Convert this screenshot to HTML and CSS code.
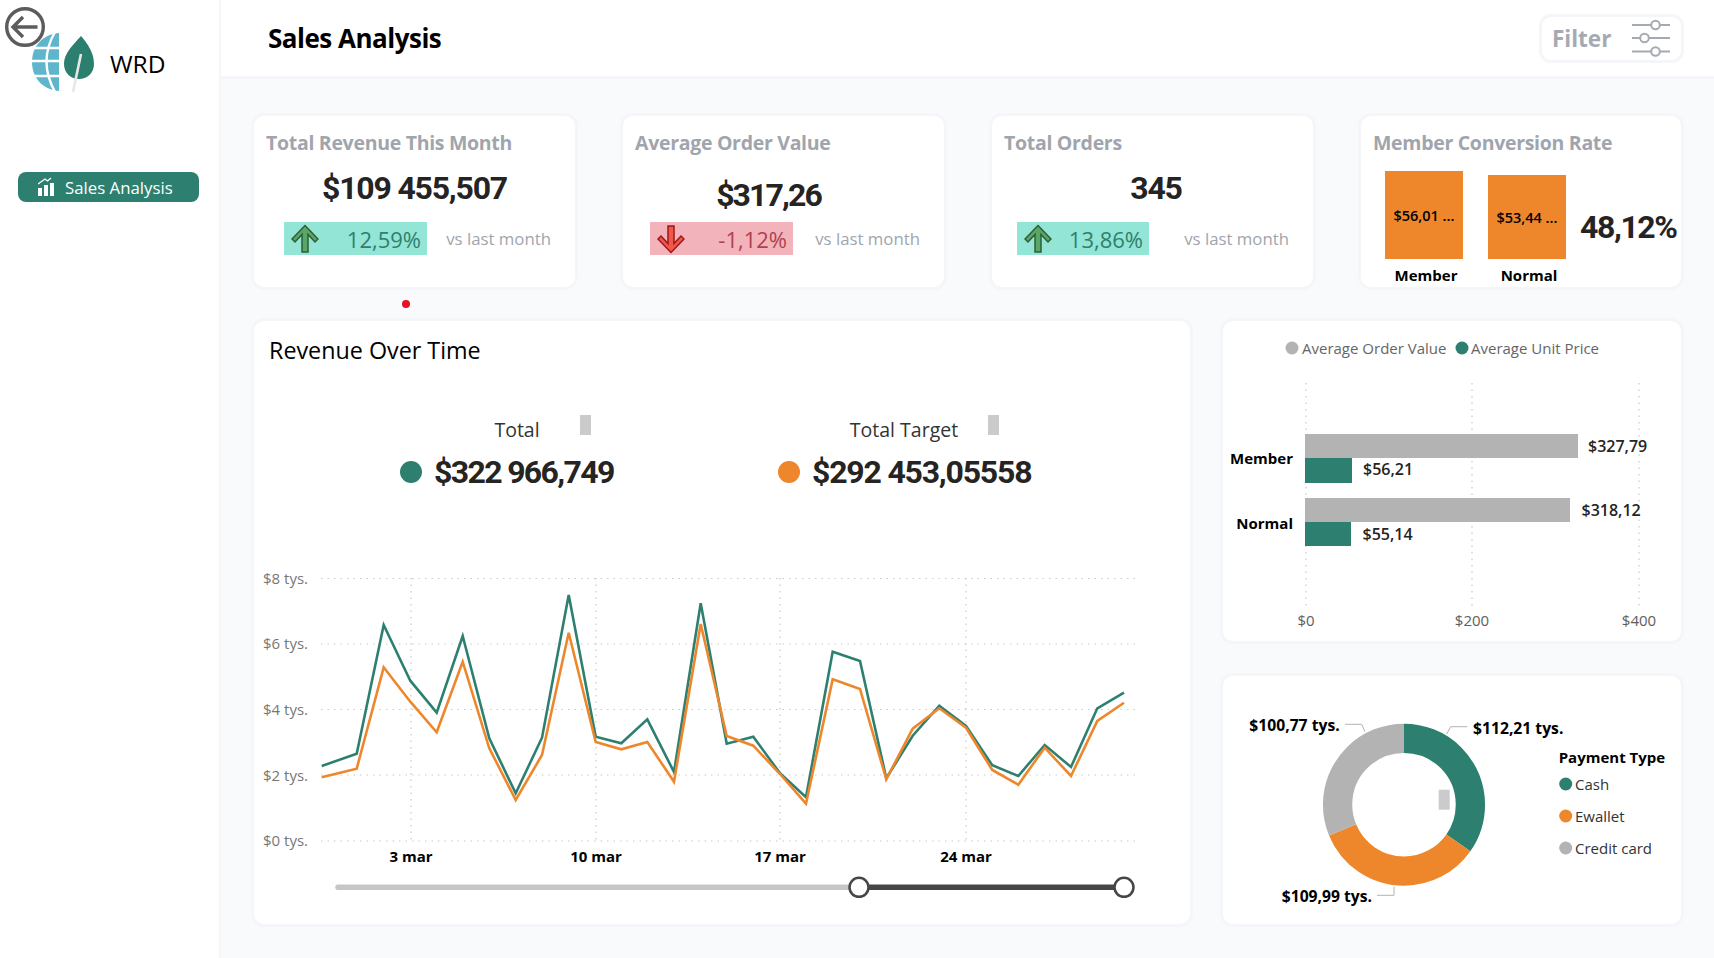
FILE: index.html
```html
<!DOCTYPE html>
<html lang="en">
<head>
    <meta charset="UTF-8">
    <title>Sales Analysis</title>
    <link rel="stylesheet" href="styles.css">
</head>
<body>
<aside class="sidebar">
    <svg class="back" width="42" height="42" viewBox="0 0 42 42">
        <circle cx="21" cy="21" r="18.300" fill="none" stroke="#5c5c5c" stroke-width="3.400"/>
        <path d="M33.500 21H9M19 11L9 21L19 31" fill="none" stroke="#5c5c5c" stroke-width="3.400"/>
    </svg>
    <div class="logo">
        <svg width="68" height="62" viewBox="0 0 68 62">
            <path d="M29 2C13 3 2 15 2 31s11 28 27 29z" fill="#5fb6cc"/>
            <path d="M0 17H29M0 30H29M0 45H29M25 1Q8 30 25 61" fill="none" stroke="#fff" stroke-width="2.400"/>
            <path d="M51 5C43 14 34 22 34 33c0 9 7 15 15 15s15-6 15-15C64 22 58 13 51 5z" fill="#2a7f6f"/>
            <path d="M51 23L43 61" stroke="#e8e8e8" stroke-width="2.600"/>
        </svg>
        <span class="logo-text">WRD</span>
    </div>
    <a class="nav-item">
        <svg width="16" height="20" viewBox="0 0 16 20">
            <path d="M0 11h4v8H0zM6 8h4v11H6zM12 6h4v13h-4z" fill="#fff"/>
            <path d="M0 7L7 2L9.500 4L13 1" fill="none" stroke="#fff" stroke-width="1.300"/>
        </svg>
        Sales Analysis
    </a>
</aside>
<div class="main">
    <header class="topbar">
        <h1>Sales Analysis</h1>
        <div class="filter">
            <span>Filter</span>
            <svg width="38" height="38" viewBox="0 0 38 38" fill="none" stroke="#a5aab2" stroke-width="2">
                <path d="M0 6H19M28 6H38M0 19H8M17 19H38M0 32.500H19M28 32.500H38"/>
                <circle cx="23.500" cy="6" r="4.300"/>
                <circle cx="12.500" cy="19" r="4.300"/>
                <circle cx="23.500" cy="32.500" r="4.300"/>
            </svg>
        </div>
    </header>
    <div class="content">
        <i class="red-dot"></i>
        <section class="kpis">
            <div class="card kpi">
                <h2>Total Revenue This Month</h2>
                <div class="kpi-value">$109 455,507</div>
                <div class="delta-row delta-first">
                    <div class="delta up">
                        <svg width="28" height="30" viewBox="0 0 28 30"><path d="M14 1.500L27 15L24 18L17 10.500V28H11V10.500L4 18L1 15z" fill="#5aa667" stroke="#2f5d3a" stroke-width="1.500"/></svg>
                        <span>12,59%</span>
                    </div>
                    <span class="vs">vs last month</span>
                </div>
            </div>
            <div class="card kpi">
                <h2>Average Order Value</h2>
                <div class="kpi-value kpi-aov">$317,26</div>
                <div class="delta-row delta-second">
                    <div class="delta down">
                        <svg width="28" height="30" viewBox="0 0 28 30"><path d="M14 28.500L27 15L24 12L17 19.500V2H11V19.500L4 12L1 15z" fill="#ee5a4a" stroke="#a3141a" stroke-width="1.500"/></svg>
                        <span>-1,12%</span>
                    </div>
                    <span class="vs">vs last month</span>
                </div>
            </div>
            <div class="card kpi">
                <h2>Total Orders</h2>
                <div class="kpi-value kpi-orders">345</div>
                <div class="delta-row delta-third">
                    <div class="delta up">
                        <svg width="28" height="30" viewBox="0 0 28 30"><path d="M14 1.500L27 15L24 18L17 10.500V28H11V10.500L4 18L1 15z" fill="#5aa667" stroke="#2f5d3a" stroke-width="1.500"/></svg>
                        <span>13,86%</span>
                    </div>
                    <span class="vs">vs last month</span>
                </div>
            </div>
            <div class="card kpi kpi-conversion">
                <h2>Member Conversion Rate</h2>
                <div class="conversion">
                    <div class="mini-col">
                        <div class="mini-bar mini-member">$56,01 ...</div>
                        <span>Member</span>
                    </div>
                    <div class="mini-col">
                        <div class="mini-bar mini-normal">$53,44 ...</div>
                        <span>Normal</span>
                    </div>
                    <div class="kpi-value rate">48,12%</div>
                </div>
            </div>
        </section>
        <section class="lower">
            <div class="card revenue">
                <h2 class="revenue-title">Revenue Over Time</h2>
                <div class="totals">
                    <div class="total total-actual">
                        <div class="total-label">Total<i class="ghost"></i></div>
                        <div class="total-value"><i class="dot teal"></i>$322 966,749</div>
                    </div>
                    <div class="total total-target">
                        <div class="total-label">Total Target<i class="ghost"></i></div>
                        <div class="total-value"><i class="dot orange"></i>$292 453,05558</div>
                    </div>
                </div>
                <svg class="line-chart" width="935" height="345" viewBox="254 560 935 345">
                    <g class="grid">
                        <path d="M321 578.500H1136M321 644H1136M321 709.500H1136M321 775H1136M321 841H1136"/>
                        <path d="M411 578V841M596 578V841M780 578V841M966 578V841"/>
                    </g>
                    <g class="axis">
                        <text x="263" y="584">$8 tys.</text>
                        <text x="263" y="649">$6 tys.</text>
                        <text x="263" y="715">$4 tys.</text>
                        <text x="263" y="781">$2 tys.</text>
                        <text x="263" y="846">$0 tys.</text>
                    </g>
                    <g class="dates">
                        <text x="411" y="862">3 mar</text>
                        <text x="596" y="862">10 mar</text>
                        <text x="780" y="862">17 mar</text>
                        <text x="966" y="862">24 mar</text>
                    </g>
                    <polyline class="serie serie-teal" points="321.700,766 356.700,753.700 383.700,625 410.300,680.700 436.700,712.700 462.700,636 489.300,738.300 515.700,793.300 542,737.700 568.700,595 595.700,736.700 621.300,743.300 647.300,719.300 674,772 700.700,603.300 726.700,743.700 753.300,736.700 780,773.300 806,797.300 832.700,651.700 860,661 886.300,778.300 912.700,735.700 939.300,705.700 966,726 992.300,765.300 1018.300,776 1044.700,745 1071,767 1097.300,708.300 1124,692.700"/>
                    <polyline class="serie serie-orange" points="321.700,777.300 356.700,768.700 383.700,667.300 410.300,701.700 436.700,732.300 462.700,661.700 489.300,748.300 515.700,800 542,755 568.700,632.700 595.700,742 621.300,749.300 647.300,742 674,781.700 700.700,624 726.700,736 753.300,745.700 780,774 806,803.700 832.700,679.300 860,689 886.300,779.300 912.700,728.700 939.300,708.300 966,727.700 992.300,770 1018.300,784.700 1044.700,747.700 1071,776 1097.300,721 1124,702.700"/>
                    <path d="M338 887.300H859" stroke="#c8c6c4" stroke-width="5.500" stroke-linecap="round"/>
                    <path d="M859 887.300H1124" stroke="#484644" stroke-width="5.500"/>
                    <circle class="handle" cx="859" cy="887.300" r="9.500"/>
                    <circle class="handle" cx="1124" cy="887.300" r="9.500"/>
                </svg>
            </div>
            <div class="side">
                <div class="card bars">
                    <svg width="458" height="320" viewBox="1223 321 458 320">
                        <g class="legend">
                            <circle cx="1292" cy="348" r="6.500" fill="#b3b3b3"/>
                            <text x="1302" y="353.500">Average Order Value</text>
                            <circle cx="1462" cy="348" r="6.500" fill="#2d8070"/>
                            <text x="1471" y="353.500">Average Unit Price</text>
                        </g>
                        <g class="grid">
                            <path d="M1306 383V606M1472 383V606M1639 383V606"/>
                        </g>
                        <rect x="1305" y="434" width="273" height="24" fill="#b3b3b3"/>
                        <rect x="1305" y="458" width="47" height="25" fill="#2d8070"/>
                        <rect x="1305" y="498" width="265" height="24" fill="#b3b3b3"/>
                        <rect x="1305" y="522" width="46" height="24" fill="#2d8070"/>
                        <g class="bar-label">
                            <text x="1588" y="451.500">$327,79</text>
                            <text x="1363" y="475">$56,21</text>
                            <text x="1581.500" y="515.500">$318,12</text>
                            <text x="1362.500" y="540">$55,14</text>
                        </g>
                        <g class="bar-cat">
                            <text x="1293" y="464">Member</text>
                            <text x="1293" y="529">Normal</text>
                        </g>
                        <g class="bar-axis">
                            <text x="1306" y="626">$0</text>
                            <text x="1472" y="626">$200</text>
                            <text x="1639" y="626">$400</text>
                        </g>
                    </svg>
                </div>
                <div class="card donut">
                    <svg width="458" height="248" viewBox="1223 676 458 248">
                        <g transform="rotate(-90 1404 804.700)" fill="none" stroke-width="29.300">
                            <circle cx="1404" cy="804.700" r="66.400" pathLength="322.970" stroke="#2d8070" stroke-dasharray="112.210 322.970"/>
                            <circle cx="1404" cy="804.700" r="66.400" pathLength="322.970" stroke="#ee872b" stroke-dasharray="109.990 322.970" stroke-dashoffset="-112.210"/>
                            <circle cx="1404" cy="804.700" r="66.400" pathLength="322.970" stroke="#b3b3b3" stroke-dasharray="100.770 322.970" stroke-dashoffset="-222.200"/>
                        </g>
                        <g fill="none" stroke="#b3b3b3" stroke-width="1">
                            <path d="M1446.700 734L1450.700 726.700H1467.300"/>
                            <path d="M1345 724.300H1361.700L1365 731.700"/>
                            <path d="M1377 895.300H1394V886.700"/>
                        </g>
                        <rect x="1438.700" y="789.700" width="11" height="20" fill="#cbcbcb"/>
                        <g class="donut-label">
                            <text x="1473" y="734">$112,21 tys.</text>
                            <text x="1249.300" y="731">$100,77 tys.</text>
                            <text x="1281.700" y="902">$109,99 tys.</text>
                        </g>
                        <text class="legend-title" x="1558.700" y="763">Payment Type</text>
                        <g class="donut-legend">
                            <circle cx="1565.700" cy="784" r="6.500" fill="#2d8070"/>
                            <text x="1575" y="790">Cash</text>
                            <circle cx="1565.700" cy="816" r="6.500" fill="#ee872b"/>
                            <text x="1575" y="822">Ewallet</text>
                            <circle cx="1565.700" cy="848" r="6.500" fill="#b3b3b3"/>
                            <text x="1575" y="854">Credit card</text>
                        </g>
                    </svg>
                </div>
            </div>
        </section>
    </div>
</div>
</body>
</html>
```
FILE: styles.css
```css
*{
    margin: 0;
    padding: 0;
    box-sizing: border-box;
}
html,body{
    height: 958px;
    overflow: hidden;
}
body{
    display: flex;
    font-family: "Open Sans", "Noto Sans", sans-serif;
    background: #f9fafc;
    color: #252423;
}
i{
    display: block;
}
svg{
    display: block;
}
/* sidebar */
.sidebar{
    position: relative;
    z-index: 1;
    width: 219px;
    flex-shrink: 0;
    background: #ffffff;
    box-shadow: 2px 0 0 #f5f6fa;
}
.back{
    position: absolute;
    left: 4px;
    top: 6px;
}
.logo{
    display: flex;
    align-items: center;
    padding: 31px 0 0 30px;
    gap: 12px;
}
.logo-text{
    font-size: 24.500px;
    color: #000000;
    padding-top: 2px;
}
.nav-item{
    display: flex;
    align-items: center;
    gap: 11px;
    width: 181px;
    height: 30px;
    margin: 79px 0 0 18px;
    padding-left: 20px;
    background: #2d8070;
    border-radius: 8px;
    color: #ffffff;
    font-size: 16.800px;
}
/* top bar */
.main{
    flex: 1;
    display: flex;
    flex-direction: column;
}
.topbar{
    display: flex;
    justify-content: space-between;
    align-items: center;
    height: 76px;
    padding: 0 30px 0 49px;
    background: #ffffff;
    box-shadow: 0 3px 0 #f5f6fa;
}
.topbar h1{
    font-size: 26px;
    font-weight: 700;
    color: #000000;
    letter-spacing: -0.500px;
}
.filter{
    display: flex;
    align-items: center;
    justify-content: space-between;
    width: 145px;
    height: 49px;
    padding: 0 11px 0 10px;
    border: 3px solid #f5f6fa;
    border-radius: 12px;
    color: #a5aab2;
    font-size: 22.500px;
    font-weight: 700;
}
/* content */
.content{
    position: relative;
    flex: 1;
    padding: 40px 33px 34px 35px;
}
.red-dot{
    position: absolute;
    left: 183px;
    top: 224px;
    width: 8px;
    height: 8px;
    border-radius: 50%;
    background: #e81123;
}
.card{
    background: #ffffff;
    border-radius: 10px;
    box-shadow: 0 0 0 3px #f5f6fa;
}
.kpis{
    display: grid;
    grid-template-columns: 321px 321px 321px 320px;
    column-gap: 48px;
    height: 171px;
    margin-bottom: 34px;
}
.kpi{
    padding-top: 13px;
}
.kpi h2{
    padding-left: 12px;
    font-size: 19.500px;
    font-weight: 700;
    line-height: 27px;
    color: #a0a5ad;
    letter-spacing: -0.300px;
}
.kpi-value{
    font-family: "Roboto", sans-serif;
    font-size: 32px;
    font-weight: 700;
    line-height: 36px;
    color: #252423;
    text-align: center;
    letter-spacing: -1.200px;
    margin-top: 14px;
}
.kpi-aov{
    padding-right: 30px;
    margin-top: 21px;
    margin-bottom: -7px;
    letter-spacing: -1.900px;
}
.kpi-orders{
    padding-left: 7px;
}
.delta-row{
    display: flex;
    justify-content: space-between;
    align-items: center;
    height: 33px;
    margin-top: 16px;
    padding-right: 24px;
}
.delta-first{
    padding-left: 30px;
}
.delta-second{
    padding-left: 27px;
}
.delta-third{
    padding-left: 25px;
}
.delta{
    display: flex;
    justify-content: space-between;
    align-items: center;
    width: 143px;
    height: 33px;
    padding: 0 6px 0 7px;
    font-size: 22px;
}
.delta-third .delta{
    width: 132px;
}
.up{
    background: #93e5d5;
    color: #2e8070;
}
.down{
    background: #f2b4ba;
    color: #b24050;
}
.vs{
    font-size: 16.800px;
    color: #a0a5ad;
}
.conversion{
    display: flex;
    align-items: flex-start;
    padding: 15px 0 0 24px;
    gap: 25px;
}
.mini-col{
    display: flex;
    flex-direction: column;
    align-items: center;
    width: 78px;
    height: 116px;
    justify-content: flex-end;
}
.mini-col span{
    height: 28px;
    padding: 6px 0 0 4px;
    font-size: 15px;
    font-weight: 700;
    line-height: 20px;
    color: #000000;
}
.mini-bar{
    display: flex;
    justify-content: center;
    align-items: center;
    width: 100%;
    background: #ee872b;
    font-size: 14.500px;
    font-weight: 600;
    color: #000000;
    white-space: nowrap;
}
.mini-member{
    height: 88px;
}
.mini-normal{
    height: 84px;
}
.kpi-value.rate{
    margin: 38px 0 0 -11px;
    letter-spacing: -1.400px;
}
.lower{
    display: grid;
    grid-template-columns: 936px 458px;
    column-gap: 33px;
    height: 603px;
}
.revenue{
    padding-top: 14px;
}
.revenue-title{
    padding-left: 15px;
    font-size: 23.300px;
    font-weight: 400;
    line-height: 31px;
    color: #000000;
}
.totals{
    display: flex;
    height: 194px;
    padding-top: 48px;
}
.total{
    width: 345px;
}
.total-actual{
    margin-left: 146px;
}
.total-target{
    margin-left: 33px;
}
.total-label{
    position: relative;
    height: 32px;
    font-size: 19.500px;
    line-height: 32px;
    color: #333333;
    text-align: center;
}
.total-actual .total-label{
    width: 234px;
}
.total-target .total-label{
    width: 252px;
}
.ghost{
    position: absolute;
    top: 1px;
    width: 11px;
    height: 20px;
    background: #cbcbcb;
}
.total-actual .ghost{
    left: 180px;
}
.total-target .ghost{
    left: 210px;
}
.total-value{
    display: flex;
    align-items: center;
    gap: 12px;
    margin-top: 6px;
    font-family: "Roboto", sans-serif;
    font-size: 32px;
    font-weight: 700;
    line-height: 40px;
    color: #252423;
}
.total-actual .total-value{
    letter-spacing: -1.650px;
}
.total-target .total-value{
    letter-spacing: -1.200px;
}
.dot{
    width: 22px;
    height: 22px;
    border-radius: 50%;
}
.teal{
    background: #2d8070;
}
.orange{
    background: #ee872b;
}
.grid path{
    fill: none;
    stroke: #c9c9c9;
    stroke-width: 1.200;
    stroke-dasharray: 1.500 5;
}
.axis text{
    font-size: 15px;
    fill: #777777;
}
.dates text{
    font-size: 15px;
    font-weight: 700;
    fill: #000000;
    text-anchor: middle;
}
.serie{
    fill: none;
    stroke-width: 2.600;
}
.serie-teal{
    stroke: #2d8070;
}
.serie-orange{
    stroke: #ee872b;
}
.handle{
    fill: #ffffff;
    stroke: #484644;
    stroke-width: 2.500;
}
.side{
    display: flex;
    flex-direction: column;
    gap: 35px;
}
.bars{
    height: 320px;
}
.donut{
    height: 248px;
}
.legend text{
    font-size: 15px;
    fill: #666666;
}
.bar-label text{
    font-size: 16px;
    font-weight: 600;
    fill: #252423;
}
.bar-cat text{
    font-size: 15px;
    font-weight: 700;
    fill: #000000;
    text-anchor: end;
}
.bar-axis text{
    font-size: 15px;
    fill: #605e5c;
    text-anchor: middle;
}
.donut-label text{
    font-size: 15.700px;
    font-weight: 700;
    fill: #000000;
}
.legend-title{
    font-size: 15px;
    font-weight: 700;
    fill: #000000;
}
.donut-legend text{
    font-size: 15px;
    fill: #333333;
}
```
